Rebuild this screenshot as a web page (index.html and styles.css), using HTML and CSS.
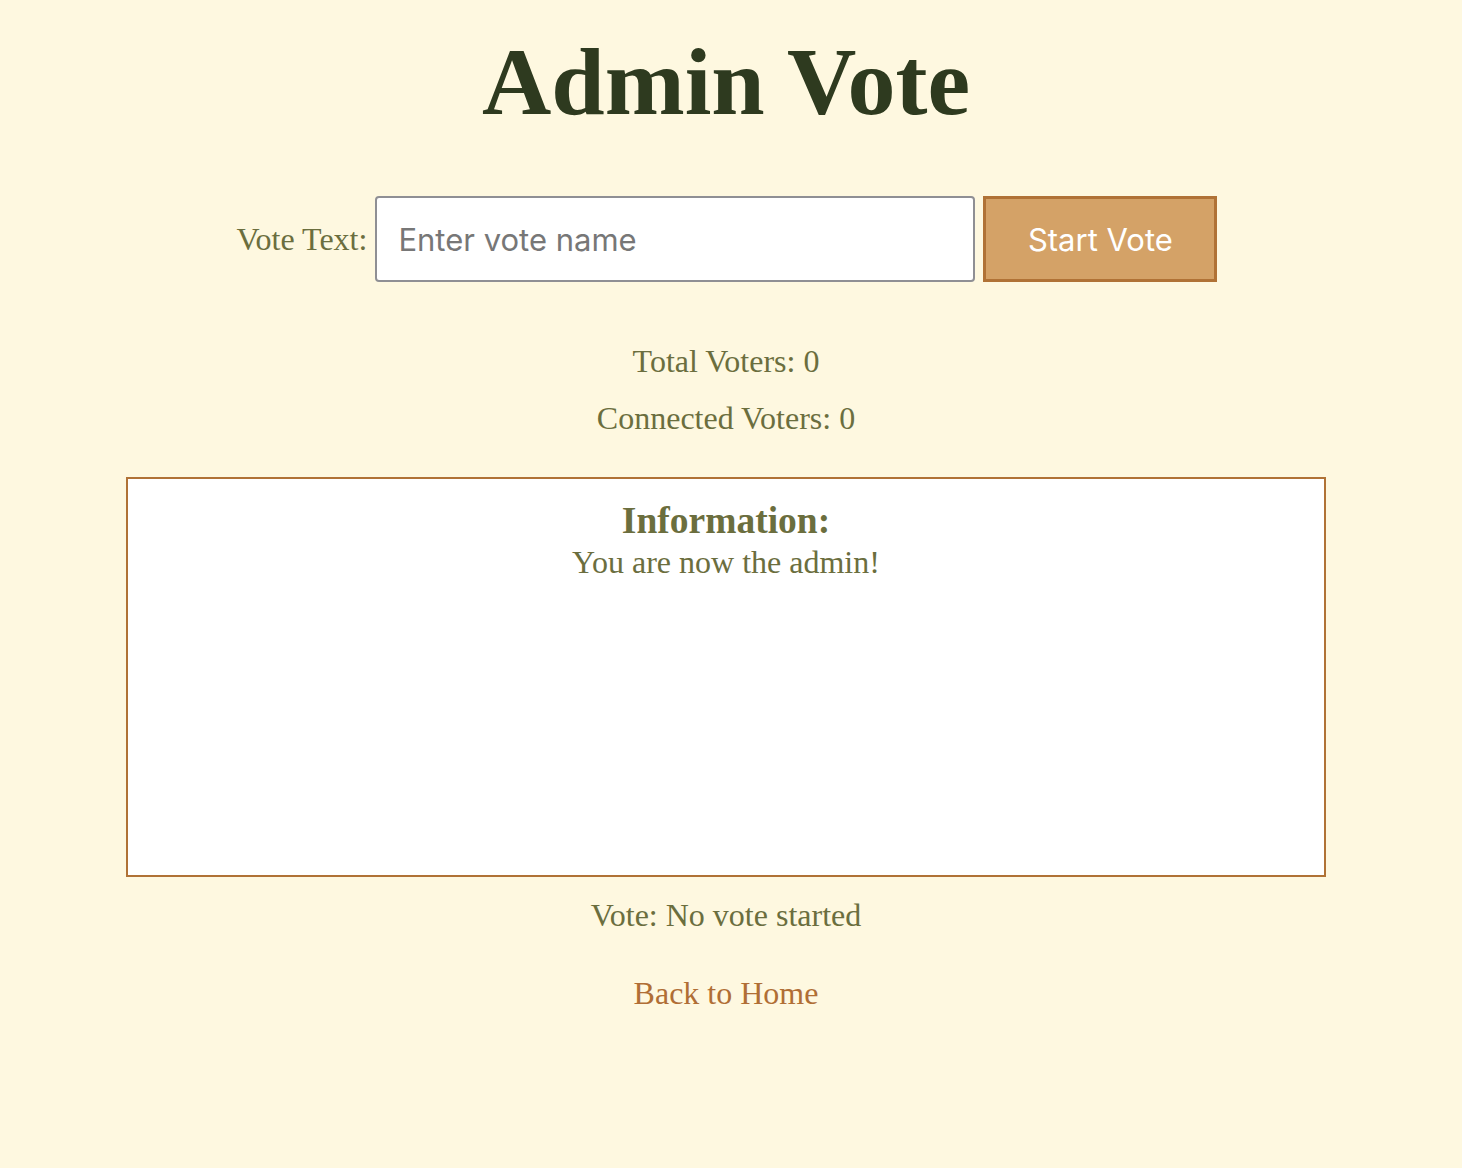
FILE: index.html
```html
<!DOCTYPE html>
<html lang="en">
<head>
<meta charset="utf-8">
<title>Admin Vote</title>
<link rel="stylesheet" href="styles.css">
</head>
<body>
<main class="page">
  <h1 class="title">Admin Vote</h1>
  <form class="vote-form">
    <label class="vote-label" for="voteText">Vote Text:</label>
    <input class="vote-input" id="voteText" type="text" placeholder="Enter vote name">
    <button class="start-btn" type="button">Start Vote</button>
  </form>
  <div class="stats">
    <p class="stat">Total Voters: 0</p>
    <p class="stat">Connected Voters: 0</p>
  </div>
  <section class="info-box">
    <h3 class="info-title">Information:</h3>
    <p class="info-text">You are now the admin!</p>
  </section>
  <p class="vote-status">Vote: No vote started</p>
  <a class="home-link" href="#">Back to Home</a>
</main>
</body>
</html>
```

FILE: styles.css
```css
html, body {
  background: #fef8e0;
}
body {
  margin: 0;
  padding: 0 10px 0 0;
  font-family: "Liberation Serif", "Times New Roman", serif;
  color: #6b6e3e;
}
.page {
  display: flex;
  flex-direction: column;
  align-items: center;
  padding-top: 27px;
}
.title {
  margin: 0;
  font-size: 96px;
  line-height: 110px;
  font-weight: bold;
  color: #2e3a1f;
}
.vote-form {
  margin-top: 59px;
  display: flex;
  align-items: center;
  gap: 8px;
  padding-left: 2px;
}
.vote-label {
  font-size: 32px;
  line-height: 37px;
  color: #6b6e3e;
}
.vote-input {
  box-sizing: border-box;
  width: 600px;
  height: 86px;
  margin: 0;
  padding: 0 21px;
  border: 2px solid #8f8f94;
  border-radius: 4px;
  background: #fff;
  font-family: "Inter", "Liberation Sans", sans-serif;
  font-size: 31px;
  color: #333;
  outline: none;
}
.vote-input::placeholder {
  color: #777777;
}
.start-btn {
  box-sizing: border-box;
  width: 234px;
  height: 86px;
  margin: 0;
  border: 3px solid #b07236;
  background: #d4a267;
  color: #ffffff;
  font-family: "Inter", "Liberation Sans", sans-serif;
  font-size: 31px;
  cursor: pointer;
}
.stats {
  margin-top: 61px;
  display: flex;
  flex-direction: column;
  align-items: center;
  gap: 20px;
}
.stat {
  margin: 0;
  font-size: 32px;
  line-height: 37px;
}
.info-box {
  box-sizing: border-box;
  margin-top: 40px;
  width: 1200px;
  height: 400px;
  border: 2px solid #b07236;
  background: #ffffff;
  padding-top: 21px;
  text-align: center;
}
.info-title {
  margin: 0;
  font-size: 37.5px;
  line-height: 42px;
  font-weight: bold;
}
.info-text {
  margin: 2px 0 0;
  font-size: 32px;
  line-height: 37px;
}
.vote-status {
  margin: 20px 0 0;
  font-size: 32px;
  line-height: 37px;
}
.home-link {
  margin-top: 41px;
  font-size: 32px;
  line-height: 37px;
  color: #b06e35;
  text-decoration: none;
}
```
